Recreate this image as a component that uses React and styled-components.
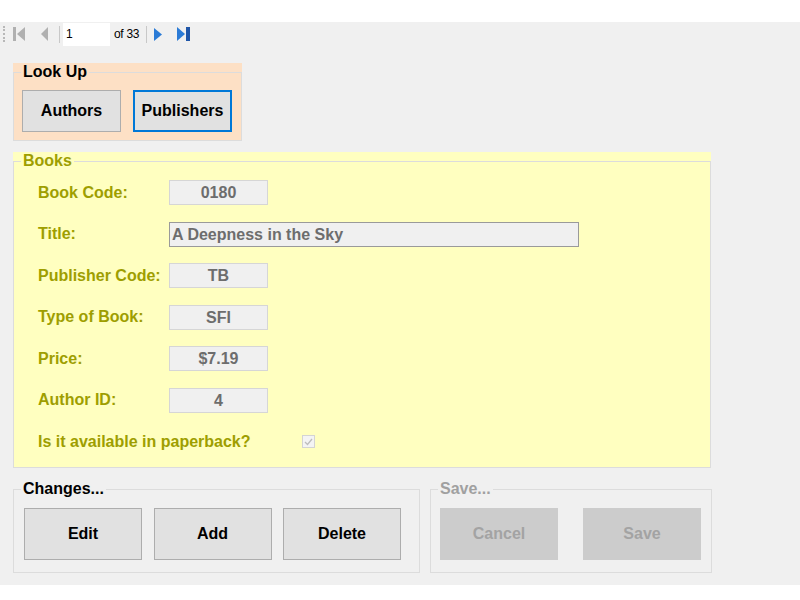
import styled, { createGlobalStyle } from "styled-components";

const GlobalStyle = createGlobalStyle`
  body {
    margin: 0;
    background: #ffffff;
    font-family: "Liberation Sans", Arial, sans-serif;
  }
`;

const Window = styled.div`
  margin-top: 22px;
  width: 800px;
  background: #f0f0f0;
  display: flex;
  flex-direction: column;
`;

const ToolStrip = styled.div`
  height: 24px;
  display: flex;
  align-items: center;
`;

const Grip = styled.span`
  margin-left: 3px;
  width: 0;
  height: 16px;
  border-left: 2px dotted #b8b8b8;
`;

const ToolIcon = styled.svg`
  display: block;
  flex: none;
  margin-left: ${({ $ml }) => $ml}px;
`;

const ToolSep = styled.span`
  width: 1px;
  height: 17px;
  background: #c8c8c8;
  margin-left: ${({ $ml }) => $ml}px;
  margin-right: 3px;
`;

const PositionBox = styled.div`
  width: 47px;
  height: 23px;
  background: #ffffff;
  font-size: 12px;
  line-height: 23px;
  padding-left: 3px;
  box-sizing: border-box;
  color: #000;
`;

const CountLabel = styled.span`
  margin-left: 4px;
  font-size: 12px;
  color: #000;
  letter-spacing: -0.3px;
`;

const Content = styled.div`
  padding: 17px 0 12px 13px;
  display: flex;
  flex-direction: column;
  align-items: flex-start;
`;

const GroupBox = styled.div`
  background: ${({ $bg }) => $bg || "transparent"};
  width: ${({ $w }) => $w}px;
  margin-top: ${({ $mt }) => $mt || 0}px;
  flex: none;
`;

const Frame = styled.fieldset`
  margin: 0;
  padding: 0;
  border: 1px solid #dcdcdc;
  min-width: 0;
`;

const Legend = styled.legend`
  margin-left: 7px;
  padding: 0 2px;
  font-weight: bold;
  font-size: 16px;
  line-height: 18px;
  color: ${({ $color }) => $color || "#000"};
`;

const GroupBody = styled.div`
  padding: ${({ $pad }) => $pad};
`;

const ButtonRow = styled.div`
  display: flex;
  gap: ${({ $gap }) => $gap}px;
`;

const WinButton = styled.button`
  width: ${({ $w }) => $w}px;
  height: ${({ $h }) => $h}px;
  box-sizing: border-box;
  margin: 0;
  padding: 0;
  background: ${({ disabled }) => (disabled ? "#cccccc" : "#e1e1e1")};
  border: ${({ $focused, disabled }) =>
    $focused
      ? "2px solid #0078d7"
      : disabled
      ? "1px solid #cccccc"
      : "1px solid #adadad"};
  color: ${({ disabled }) => (disabled ? "#a3a3a3" : "#000")};
  font-family: "Liberation Sans", Arial, sans-serif;
  font-weight: bold;
  font-size: 16px;
`;

const BottomRow = styled.div`
  display: flex;
  gap: 10px;
  margin-top: 12px;
`;

const FieldList = styled.div`
  display: flex;
  flex-direction: column;
  gap: 16.5px;
`;

const FieldRow = styled.div`
  height: 25px;
  display: flex;
  align-items: center;
`;

const FieldLabel = styled.span`
  width: ${({ $w }) => $w || 131}px;
  flex: none;
  font-weight: bold;
  font-size: 16px;
  color: #9e9e00;
`;

const ValueBox = styled.div`
  width: ${({ $w }) => $w}px;
  height: 25px;
  box-sizing: border-box;
  background: #f0f0f0;
  border: 1px solid ${({ $editable }) => ($editable ? "#9a9a9a" : "#d6d6d6")};
  font-weight: bold;
  font-size: 16px;
  line-height: 23px;
  color: #6d6d6d;
  text-align: ${({ $editable }) => ($editable ? "left" : "center")};
  padding-left: ${({ $editable }) => ($editable ? "2px" : "0")};
  white-space: nowrap;
  overflow: hidden;
`;

const CheckBox = styled.span`
  width: 13px;
  height: 13px;
  box-sizing: border-box;
  border: 1px solid #d4d4d4;
  background: #f4f4f4;
  display: flex;
  align-items: center;
  justify-content: center;
`;

const fields = [
  { label: "Book Code:", value: "0180" },
  { label: "Title:", value: "A Deepness in the Sky", wide: true },
  { label: "Publisher Code:", value: "TB" },
  { label: "Type of Book:", value: "SFI" },
  { label: "Price:", value: "$7.19" },
  { label: "Author ID:", value: "4" },
];

export default function App() {
  return (
    <>
      <GlobalStyle />
      <Window>
        <ToolStrip>
          <Grip />
          <ToolIcon $ml={8} width="12" height="14" viewBox="0 0 12 14">
            <rect x="0" y="0" width="3" height="14" fill="#b0b0b0" />
            <path d="M12 0 L4 7 L12 14 Z" fill="#b0b0b0" />
          </ToolIcon>
          <ToolIcon $ml={16} width="7" height="14" viewBox="0 0 7 14">
            <path d="M7 0 L0 7 L7 14 Z" fill="#b0b0b0" />
          </ToolIcon>
          <ToolSep $ml={11} />
          <PositionBox>1</PositionBox>
          <CountLabel>of 33</CountLabel>
          <ToolSep $ml={7} />
          <ToolIcon $ml={4} width="8" height="13" viewBox="0 0 8 13">
            <path d="M0 0 L8 6.5 L0 13 Z" fill="#2b7bd6" />
          </ToolIcon>
          <ToolIcon $ml={15} width="13" height="14" viewBox="0 0 13 14">
            <path d="M0 0 L8 7 L0 14 Z" fill="#2b7bd6" />
            <rect x="9" y="0" width="4" height="14" fill="#1f56a8" />
          </ToolIcon>
        </ToolStrip>

        <Content>
          <GroupBox $bg="#fde0c5" $w={229}>
            <Frame>
              <Legend>Look Up</Legend>
              <GroupBody $pad="9px 8px 8px">
                <ButtonRow $gap={12}>
                  <WinButton $w={99} $h={42}>Authors</WinButton>
                  <WinButton $w={99} $h={42} $focused>
                    Publishers
                  </WinButton>
                </ButtonRow>
              </GroupBody>
            </Frame>
          </GroupBox>

          <GroupBox $bg="#ffffc0" $w={698} $mt={11}>
            <Frame>
              <Legend $color="#9e9e00">Books</Legend>
              <GroupBody $pad="10px 24px 13px">
                <FieldList>
                  {fields.map((f) => (
                    <FieldRow key={f.label}>
                      <FieldLabel>{f.label}</FieldLabel>
                      <ValueBox $w={f.wide ? 410 : 99} $editable={f.wide}>
                        {f.value}
                      </ValueBox>
                    </FieldRow>
                  ))}
                  <FieldRow>
                    <FieldLabel $w={264}>Is it available in paperback?</FieldLabel>
                    <CheckBox>
                      <svg width="9" height="8" viewBox="0 0 9 8">
                        <path
                          d="M1 4 L3.5 6.5 L8 1"
                          fill="none"
                          stroke="#bdbdbd"
                          strokeWidth="1.3"
                        />
                      </svg>
                    </CheckBox>
                  </FieldRow>
                </FieldList>
              </GroupBody>
            </Frame>
          </GroupBox>

          <BottomRow>
            <GroupBox $w={407}>
              <Frame>
                <Legend>Changes...</Legend>
                <GroupBody $pad="10px 10px 12px">
                  <ButtonRow $gap={11.5}>
                    <WinButton $w={118} $h={52}>Edit</WinButton>
                    <WinButton $w={118} $h={52}>Add</WinButton>
                    <WinButton $w={118} $h={52}>Delete</WinButton>
                  </ButtonRow>
                </GroupBody>
              </Frame>
            </GroupBox>
            <GroupBox $w={282}>
              <Frame>
                <Legend $color="#a0a0a0">Save...</Legend>
                <GroupBody $pad="10px 9px 12px">
                  <ButtonRow $gap={25}>
                    <WinButton $w={118} $h={52} disabled>
                      Cancel
                    </WinButton>
                    <WinButton $w={118} $h={52} disabled>
                      Save
                    </WinButton>
                  </ButtonRow>
                </GroupBody>
              </Frame>
            </GroupBox>
          </BottomRow>
        </Content>
      </Window>
    </>
  );
}
